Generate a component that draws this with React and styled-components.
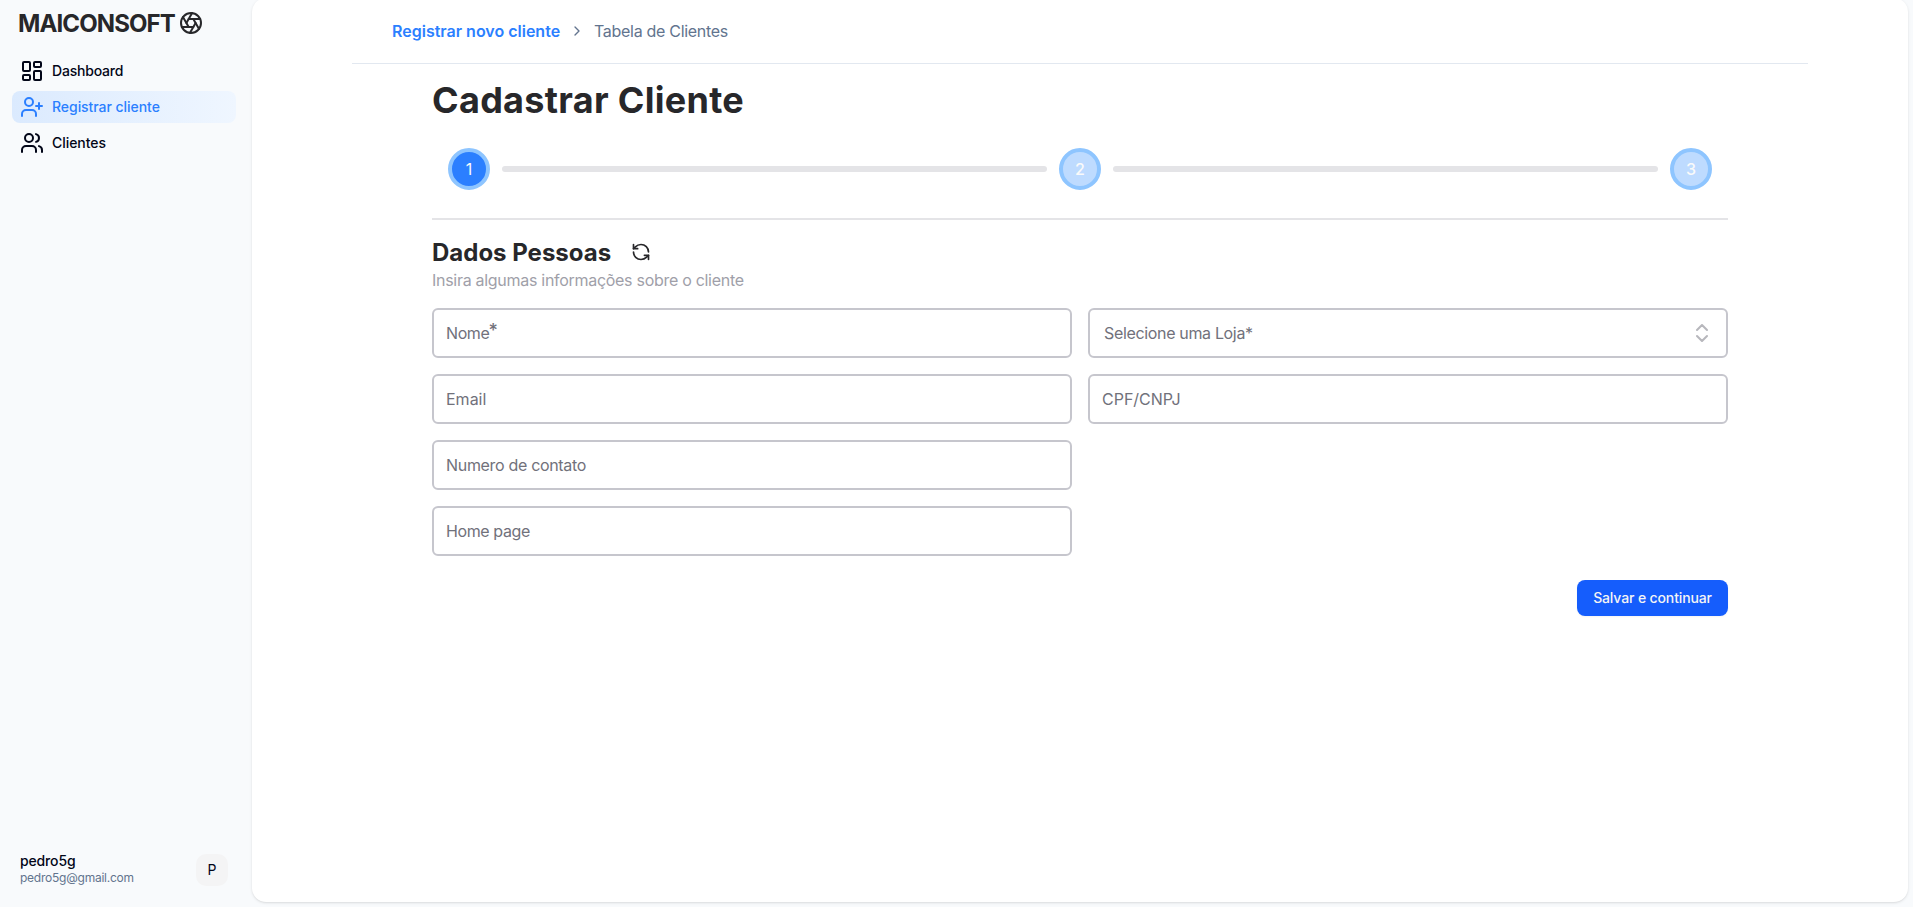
import React from "react";
import styled, { createGlobalStyle } from "styled-components";
import {
  Aperture,
  ChevronRight,
  ChevronsUpDown,
  LayoutDashboard,
  RefreshCcw,
  UserPlus,
  Users,
} from "lucide-react";

const GlobalStyle = createGlobalStyle`
  *, *::before, *::after { box-sizing: border-box; }
  body {
    margin: 0;
    background: #f8fafc;
    color: #020618;
    font-family: Inter, "Liberation Sans", sans-serif;
    font-size: 16px;
    line-height: 24px;
    overflow: hidden;
  }
  h1, h2, p { margin: 0; }
  svg { display: block; flex-shrink: 0; }
`;

const Layout = styled.div`
  display: flex;
  height: 100vh;
`;

const Sidebar = styled.aside`
  display: flex;
  flex-direction: column;
  width: 252px;
  padding: 11px 16px 17px 12px;
  flex-shrink: 0;
`;

const Brand = styled.div`
  display: flex;
  align-items: center;
  gap: 5px;
  padding-left: 6px;
  height: 24px;
  color: #27272a;
`;

const BrandName = styled.span`
  width: 156px;
  padding-top: 2px;
  font-size: 24px;
  font-weight: 700;
  letter-spacing: -0.9px;
  white-space: nowrap;
`;

const Nav = styled.nav`
  display: flex;
  flex-direction: column;
  gap: 4px;
  margin-top: 20px;
`;

const NavItem = styled.a`
  display: flex;
  align-items: center;
  gap: 8px;
  height: 32px;
  padding: 0 8px;
  border-radius: 8px;
  font-size: 14px;
  font-weight: 500;
  letter-spacing: ${(p) => p.$tracking || "-0.05px"};
  color: ${(p) => (p.$active ? "#2b7fff" : "#020618")};
  background: ${(p) => (p.$active ? "linear-gradient(to right, #dbeafe, #eff6ff)" : "none")};
`;

const Account = styled.div`
  display: flex;
  align-items: center;
  justify-content: space-between;
  margin-top: auto;
  padding: 0 8px;
  height: 40px;
`;

const AccountText = styled.div`
  padding-bottom: 2px;
`;

const AccountName = styled.p`
  font-size: 14px;
  font-weight: 500;
  line-height: 17px;
  letter-spacing: -0.15px;
`;

const AccountEmail = styled.p`
  font-size: 12px;
  line-height: 17px;
  letter-spacing: -0.24px;
  color: #62748e;
`;

const Avatar = styled.div`
  display: grid;
  place-items: center;
  width: 32px;
  height: 32px;
  border-radius: 10px;
  background: #f4f4f5;
  font-size: 14px;
`;

const Main = styled.main`
  flex: 1;
  margin: -2px 5px 5px 0;
  padding: 2px 100px 0;
  border-radius: 14px;
  background: #fff;
  box-shadow: 0 1px 3px rgba(0, 0, 0, 0.1), 0 1px 2px -1px rgba(0, 0, 0, 0.1);
`;

const Breadcrumb = styled.header`
  display: flex;
  align-items: center;
  height: 64px;
  padding: 0 40px 1px;
  border-bottom: 1px solid #e2e8f0;
  color: #62748e;
  white-space: nowrap;
`;

const Current = styled.span`
  width: 168px;
  font-weight: 600;
  color: #2b7fff;
`;

const Trail = styled.span`
  margin-left: 9px;
  letter-spacing: -0.3px;
`;

const Separator = styled(ChevronRight)`
  margin-left: 9px;
`;

const Page = styled.section`
  padding: 16px 80px 0;
`;

const Title = styled.h1`
  font-size: 36px;
  font-weight: 700;
  line-height: 40px;
  letter-spacing: 0.3px;
  color: #27272a;
`;

const Stepper = styled.div`
  display: flex;
  align-items: center;
  gap: 12px;
  margin-top: 12px;
  padding: 16px 16px 28px;
  border-bottom: 2px solid #e4e4e7;
`;

const Step = styled.div`
  display: grid;
  place-items: center;
  width: 42px;
  height: 42px;
  flex-shrink: 0;
  border: 4px solid #8ec5ff;
  border-radius: 50%;
  background: ${(p) => (p.$active ? "#2b7fff" : "#bedbff")};
  color: #fafafa;
  font-weight: ${(p) => (p.$active ? 400 : 500)};
`;

const StepLine = styled.div`
  flex: 1;
  height: 6px;
  border-radius: 3px;
  background: #e4e4e7;
`;

const SectionHead = styled.div`
  display: flex;
  align-items: center;
  gap: 20px;
  height: 32px;
  margin-top: 16px;
  color: #27272a;
`;

const SectionTitle = styled.h2`
  width: 179px;
  padding-top: 1px;
  font-size: 24px;
  font-weight: 700;
  line-height: 32px;
  white-space: nowrap;
`;

const Hint = styled.p`
  color: #9f9fa9;
  letter-spacing: -0.29px;
`;

const Fields = styled.div`
  display: grid;
  grid-template-columns: 1fr 1fr;
  gap: 16px;
  margin-top: 16px;
`;

const Field = styled.div`
  display: flex;
  align-items: center;
  grid-column: ${(p) => p.$column || "auto"};
  height: 50px;
  padding: 0 12px;
  border: 2px solid #c6c6cd;
  border-radius: 6px;
  color: #71717b;
  letter-spacing: ${(p) => p.$tracking || "0"};
`;

const SelectField = styled(Field)`
  justify-content: space-between;
  padding: 0 12px 0 14px;

  svg { opacity: 0.5; }
`;

const Required = styled.span`
  align-self: flex-start;
  margin-top: 9px;
  margin-left: -1px;
  font-size: 18px;
  font-weight: 500;
`;

const Actions = styled.div`
  display: flex;
  justify-content: flex-end;
  margin-top: 24px;
`;

const SubmitButton = styled.button`
  width: 151px;
  height: 36px;
  padding: 0;
  border: 0;
  border-radius: 8px;
  background: #155dfc;
  color: #f4f4f5;
  font: 500 14px/20px Inter, "Liberation Sans", sans-serif;
  letter-spacing: -0.13px;
  white-space: nowrap;
  box-shadow: 0 1px 2px rgba(0, 0, 0, 0.05);
`;

export default function App() {
  return (
    <>
      <GlobalStyle />
      <Layout>
        <Sidebar>
          <Brand>
            <BrandName>MAICONSOFT</BrandName>
            <Aperture size={24} />
          </Brand>
          <Nav>
            <NavItem $tracking="-0.2px"><LayoutDashboard size={24} />Dashboard</NavItem>
            <NavItem $active><UserPlus size={24} />Registrar cliente</NavItem>
            <NavItem><Users size={24} />Clientes</NavItem>
          </Nav>
          <Account>
            <AccountText>
              <AccountName>pedro5g</AccountName>
              <AccountEmail>pedro5g@gmail.com</AccountEmail>
            </AccountText>
            <Avatar>P</Avatar>
          </Account>
        </Sidebar>
        <Main>
          <Breadcrumb>
            <Current>Registrar novo cliente</Current>
            <Separator size={16} />
            <Trail>Tabela de Clientes</Trail>
          </Breadcrumb>
          <Page>
            <Title>Cadastrar Cliente</Title>
            <Stepper>
              <Step $active>1</Step>
              <StepLine />
              <Step>2</Step>
              <StepLine />
              <Step>3</Step>
            </Stepper>
            <SectionHead>
              <SectionTitle>Dados Pessoas</SectionTitle>
              <RefreshCcw size={20} strokeWidth={2} />
            </SectionHead>
            <Hint>Insira algumas informações sobre o cliente</Hint>
            <Fields>
              <Field $tracking="-0.4px">Nome<Required>*</Required></Field>
              <SelectField $tracking="-0.34px">Selecione uma Loja*<ChevronsUpDown size={24} /></SelectField>
              <Field>Email</Field>
              <Field>CPF/CNPJ</Field>
              <Field $column="1" $tracking="-0.32px">Numero de contato</Field>
              <Field $column="1" $tracking="-0.4px">Home page</Field>
            </Fields>
            <Actions>
              <SubmitButton>Salvar e continuar</SubmitButton>
            </Actions>
          </Page>
        </Main>
      </Layout>
    </>
  );
}
